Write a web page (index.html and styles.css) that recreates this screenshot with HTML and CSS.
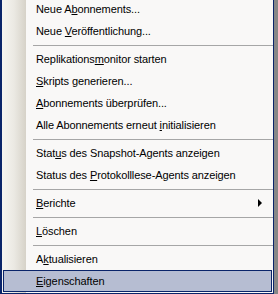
FILE: index.html
```html
<!DOCTYPE html>
<html lang="de">
<head>
<meta charset="utf-8">
<title>Kontextmenü</title>
<link rel="stylesheet" href="styles.css">
</head>
<body>
<div class="menu">
  <div class="item"><span class="label">Neue A<u>b</u>onnements...</span></div>
  <div class="item"><span class="label">Neue <u>V</u>eröffentlichung...</span></div>
  <div class="sep"></div>
  <div class="item"><span class="label">Replikations<u>m</u>onitor starten</span></div>
  <div class="item"><span class="label"><u>S</u>kripts generieren...</span></div>
  <div class="item"><span class="label"><u>A</u>bonnements überprüfen...</span></div>
  <div class="item"><span class="label">Alle Abonnements erneut <u>i</u>nitialisieren</span></div>
  <div class="sep"></div>
  <div class="item"><span class="label">Stat<u>u</u>s des Snapshot-Agents anzeigen</span></div>
  <div class="item"><span class="label">Status des <u>P</u>rotokolllese-Agents anzeigen</span></div>
  <div class="sep"></div>
  <div class="item"><span class="label"><u>B</u>erichte</span><span class="arrow"></span></div>
  <div class="sep"></div>
  <div class="item"><span class="label"><u>L</u>öschen</span></div>
  <div class="sep"></div>
  <div class="item"><span class="label">A<u>k</u>tualisieren</span></div>
  <div class="item item-active"><span class="hl"><span class="label"><u>E</u>igenschaften</span></span></div>
</div>
</body>
</html>
```

FILE: styles.css
```css
html, body {
  margin: 0;
  padding: 0;
  background: #f9f8f7;
  overflow: hidden;
}

body {
  width: 278px;
  height: 294px;
  font-family: "Liberation Sans", Arial, sans-serif;
  font-size: 11px;
  color: #000;
}

.menu {
  width: 271px;
  margin-top: -2px;
  border-left: 2px solid #0a246a;
  border-right: 1px solid #0a246a;
  border-bottom: 2px solid #0a246a;
  box-shadow: 4px 0 0 #878787;
  background: linear-gradient(to right, #f6f5f1 0, #ebe9e3 12px, #d6d2c8 24px, #f9f8f7 24px);
  display: flex;
  flex-direction: column;
}

.item {
  height: 22px;
  line-height: 22px;
  padding-left: 34px;
  display: flex;
  align-items: center;
  white-space: nowrap;
}

.label {
  white-space: pre;
  letter-spacing: -0.1px;
}

.item u {
  text-decoration: underline;
  text-underline-offset: 1px;
}

.arrow {
  margin-left: auto;
  margin-right: 11px;
  width: 0;
  height: 0;
  border-left: 4px solid #000;
  border-top: 4px solid transparent;
  border-bottom: 4px solid transparent;
}

.sep {
  height: 6px;
  display: flex;
  align-items: center;
  padding-left: 31px;
}

.sep::before {
  content: "";
  flex: 1;
  height: 1px;
  background: #a6a6a6;
}

.item-active {
  padding: 0 0 1px 1px;
  height: 22px;
  align-items: stretch;
}

.hl {
  flex: 1;
  display: flex;
  align-items: center;
  margin-right: 1px;
  background: #b6bdd2;
  border: 1px solid #0a246a;
  padding-left: 32px;
}
```
